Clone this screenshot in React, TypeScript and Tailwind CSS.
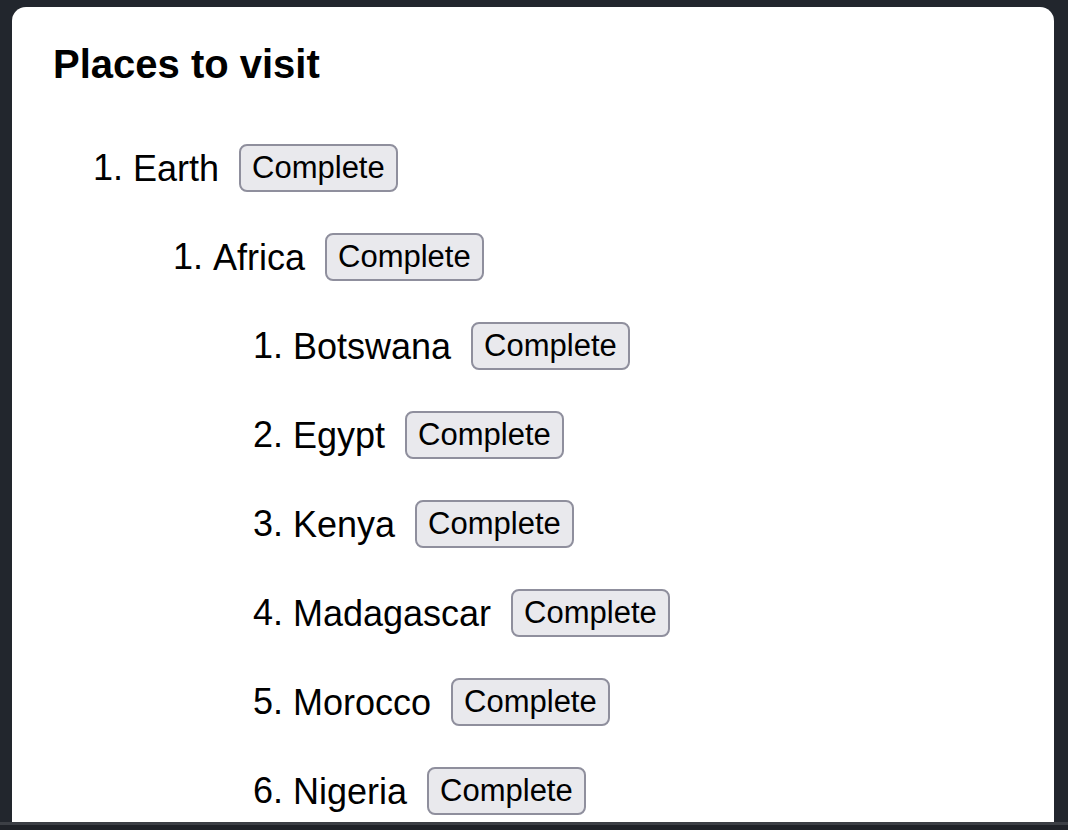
const africa = ["Botswana", "Egypt", "Kenya", "Madagascar", "Morocco", "Nigeria"];

function Row({ name }: { name: string }) {
  return (
    <div className="h-[48px] leading-[48px] whitespace-nowrap">
      <span>{name}</span>
      <button className="ml-[20px] h-[48px] px-[11px] text-[31px] leading-[35px] bg-[#e9e9ed] border-2 border-[#8f8f9d] rounded-[8px] align-[2px] text-black">
        Complete
      </button>
    </div>
  );
}

export default function App() {
  return (
    <div className="w-[1068px] h-[830px] overflow-hidden bg-[#22262d] flex flex-col font-['Liberation_Sans',Arial,sans-serif]">
      <div className="flex-1 min-h-0 pl-[12px] pr-[14px] pt-[7px]">
        <div className="h-full bg-white rounded-t-[14px] overflow-hidden pl-[41px] pt-[37px] text-black">
          <h1 className="text-[40px] font-bold leading-[40px]">Places to visit</h1>
          <ol className="list-decimal list-outside pl-[80px] text-[36px] mt-[57px]">
            <li>
              <Row name="Earth" />
              <ol className="list-decimal list-outside pl-[80px]">
                <li className="mt-[38.5px]">
                  <Row name="Africa" />
                  <ol className="list-decimal list-outside pl-[80px]">
                    {africa.map((c) => (
                      <li key={c} className="mt-[38.5px]">
                        <Row name={c} />
                      </li>
                    ))}
                  </ol>
                </li>
              </ol>
            </li>
          </ol>
        </div>
      </div>
      <div className="h-[3px] bg-[#3c3f45]" />
      <div className="h-[5px] bg-[#1f2228]" />
    </div>
  );
}
